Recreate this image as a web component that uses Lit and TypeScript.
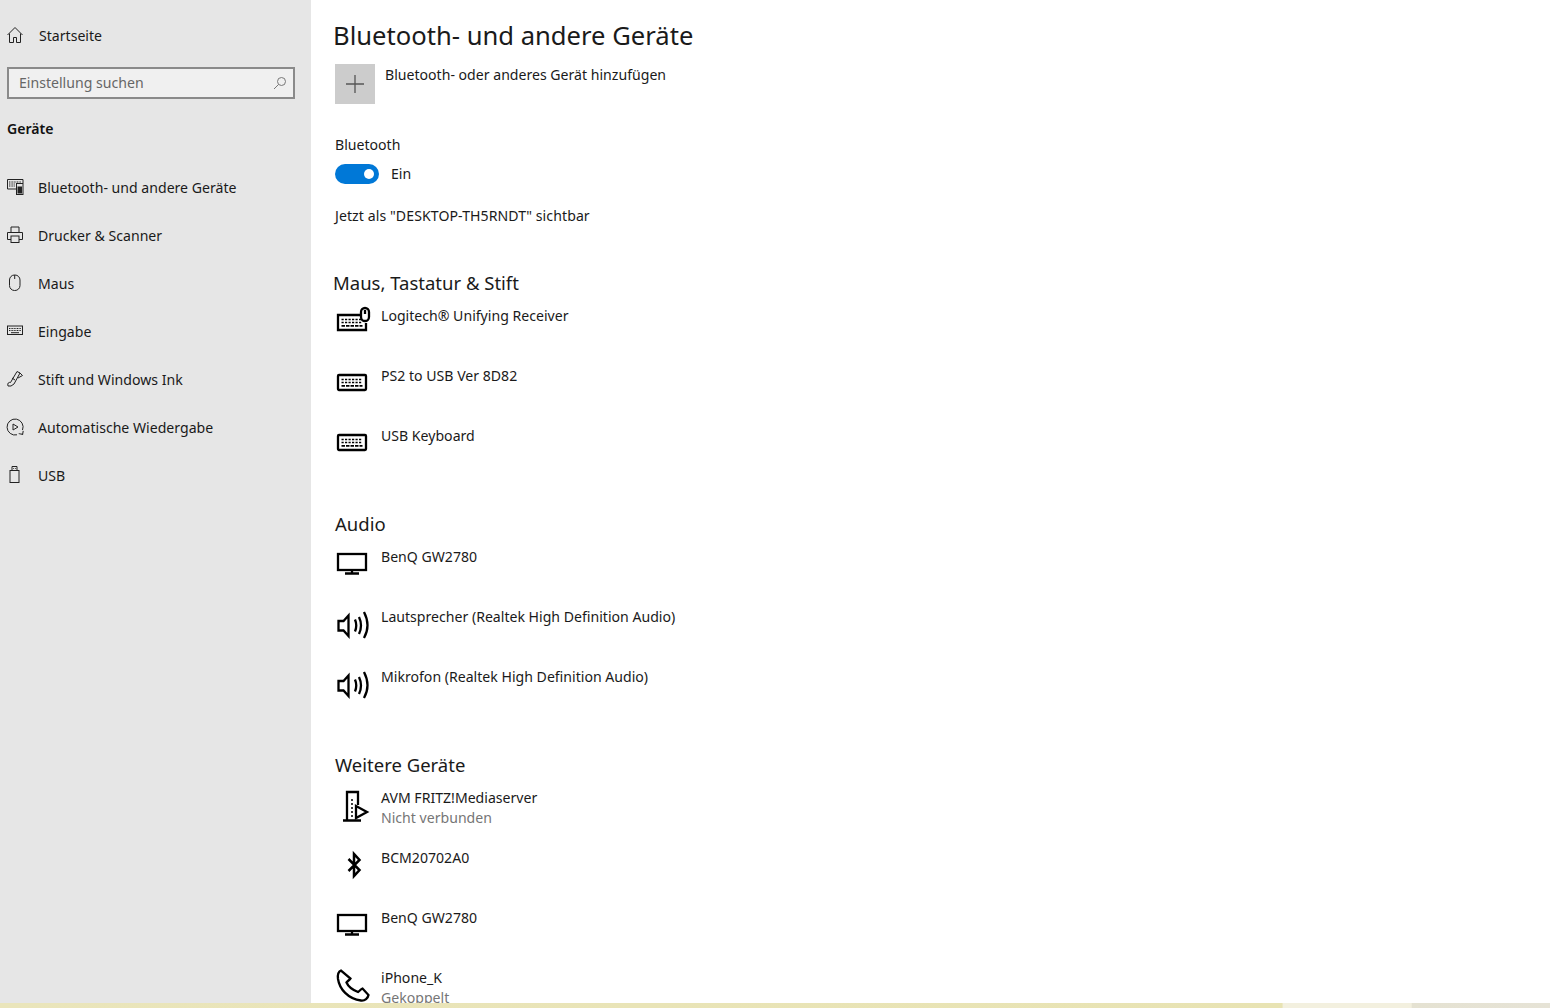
import { LitElement, html, css, svg } from "lit";
import { customElement } from "lit/decorators.js";

const side = (c: unknown) => html`<svg class="si" viewBox="0 0 18 20" fill="none" stroke="#222" stroke-width="1">${c}</svg>`;
const big = (c: unknown) => html`<svg class="bi" viewBox="0 0 36 40" fill="none" stroke="#000" stroke-width="2.300">${c}</svg>`;

const keys = svg`<path d="M6.500 14.500h21M6.500 17.500h21" stroke-width="1.700" stroke-dasharray="2.200 1.300"/><path d="M6.500 20.800h21" stroke-width="1.700" stroke-dasharray="3.500 1"/>`;
const keyboard = big(svg`<rect x="3" y="10" width="28" height="15" rx="1"/>${keys}`);
const kbMouse = big(svg`<path d="M27 10H3v15h28V18"/>${keys}<rect x="26" y="3" width="8" height="13" rx="4" fill="#fff"/><path d="M30 5v4"/>`);
const monitor = big(svg`<rect x="3" y="8" width="28" height="16"/><path d="M17 24v3M10 27.500h14"/>`);
const speaker = big(svg`<path d="M3.500 15h5l5-5.500v20.500l-5-5.500h-5z"/><path d="M20 13.500q2.500 6 0 12M24 11q4 8.500 0 17M29 6q7 13.500 0 26"/>`);
const media = big(svg`<path d="M23 18V5H12v28.500M8 33.500h18"/><path d="M17 12v18" stroke-dasharray="2 2" stroke-width="1.500"/><path d="M21 19l11 6-11 6z"/>`);
const bluetooth = big(svg`<path d="M13.500 12l11 11-5.500 6V7l5.500 6-11 11" stroke-width="2.500"/>`);
const phone = big(svg`<path d="M6 3.500C3.500 4.500 2.500 8 3 12 4.500 22 13 32 26 33.500c4 .5 7-2.500 7.500-5.500l-6-6.500c-1.500.5-3 2.500-4.500 3.500-5-2-10-6-11.500-9.500 1-1.500 3.500-3 4-4z"/>`);

const nav = [
  ["Bluetooth- und andere Geräte", side(svg`<path d="M10 12H1.500V2.500H17V6"/><path d="M3 5h12M3 7h6M3 9h6" stroke-dasharray="1 .6"/><rect x="10.500" y="6.500" width="6.500" height="11"/><rect x="12" y="10" width="3.500" height="6" fill="#222"/>`)],
  ["Drucker &amp; Scanner", side(svg`<path d="M5 7.500V2h8v5.500M5 14.500H1.500v-7h15v7H13"/><rect x="5" y="11" width="8" height="6.500"/>`)],
  ["Maus", side(svg`<rect x="3.500" y="2" width="10.500" height="15.500" rx="5"/><path d="M8.700 2v4"/>`)],
  ["Eingabe", side(svg`<rect x="1.500" y="5" width="15" height="8.500"/><path d="M3 7.500h12M3 9.500h12" stroke-dasharray="1 .6"/><path d="M5 11.700h8"/>`)],
  ["Stift und Windows Ink", side(svg`<path d="M2 17C1 14 3 13 4.500 13.500L11 2.500 14 4 8 15Q5 18 2 17z"/><path d="M12 9l4.500-2.500-3-3M6 9l3 2"/>`)],
  ["Automatische Wiedergabe", side(svg`<path d="M11 17.800A8 8 0 1 1 16.500 13"/><path d="M7 7l5 3-5 3z"/><path d="M13 17h4v-3.500" transform="rotate(10 15 15)"/>`)],
  ["USB", side(svg`<rect x="4" y="5.500" width="9" height="12"/><path d="M6 5.500v-4h5v4M7.300 3.500h.8M9.300 3.500h.8"/>`)],
] as const;

type Dev = [string, unknown, string?];
const sections: [string, string, Dev[]][] = [
  ["Maus, Tastatur & Stift", "tight", [["Logitech® Unifying Receiver", kbMouse], ["PS2 to USB Ver 8D82", keyboard], ["USB Keyboard", keyboard]]],
  ["Audio", "", [["BenQ GW2780", monitor], ["Lautsprecher (Realtek High Definition Audio)", speaker], ["Mikrofon (Realtek High Definition Audio)", speaker]]],
  ["Weitere Geräte", "", [["AVM FRITZ!Mediaserver", media, "Nicht verbunden"], ["BCM20702A0", bluetooth], ["BenQ GW2780", monitor], ["iPhone_K", phone, "Gekoppelt"]]],
];

@customElement("app-root")
export class AppRoot extends LitElement {
  static styles = css`
    :host { display: block; height: 1008px; overflow: hidden; background: #fff; color: #1a1a1a;
      font-family: "Noto Sans", "Open Sans", sans-serif; font-size: 14.1px; }
    .page { display: flex; flex-direction: column; height: 1008px; }
    .body { display: flex; flex: 1; min-height: 0; overflow: hidden; }
    aside { width: 311px; flex: none; background: #e6e6e6; padding: 11px 16px 0 7px; box-sizing: border-box; }
    .si { width: 18px; height: 20px; flex: none; }
    .home { display: flex; align-items: center; height: 48px; gap: 15px; }
    .home .si { margin-left: -1px; }
    .search { display: flex; align-items: center; justify-content: space-between; box-sizing: border-box; height: 32px;
      margin-top: 8px; border: 2px solid #8a8a8a; background: #f0f0f0; color: #666; padding: 0 6px 0 10px; }
    .search span { padding-bottom: 2px; }
    .cat { font-weight: 600; line-height: 20px; margin-top: 20px; margin-bottom: 24px; color: #111; }
    .nav { display: flex; align-items: center; height: 48px; gap: 14px; margin-left: -1px; }
    main { flex: 1; padding-left: 22px; min-width: 0; }
    h1 { font-size: 25.6px; font-weight: 400; line-height: 36px; margin: 18px 0 0; color: #1a1a1a; }
    .content { padding-left: 2px; }
    .add { display: flex; gap: 10px; margin-top: 10px; }
    .plus { width: 40px; height: 40px; background: #ccc; display: flex; align-items: center; justify-content: center; }
    .add span { line-height: 22px; }
    .label { line-height: 20px; margin-top: 31px; }
    .toggle { display: flex; align-items: center; gap: 12px; margin-top: 9px; height: 20px; }
    .toggle span { padding-bottom: 1px; }
    .track { width: 44px; height: 20px; border-radius: 10px; background: #0078d7; display: flex; align-items: center; justify-content: flex-end; padding-right: 5px; box-sizing: border-box; }
    .knob { width: 10px; height: 10px; border-radius: 50%; background: #fff; }
    .visible { line-height: 20px; margin-top: 22px; letter-spacing: .08px; }
    h2 { font-size: 18.5px; font-weight: 400; line-height: 28px; margin: 25px 0 8px; color: #1a1a1a; }
    h2.first { margin-top: 43px; }
    h2.tight { margin-left: -2px; }
    .dev { display: flex; height: 60px; gap: 10px; }
    .bi { width: 36px; height: 40px; flex: none; }
    .txt { padding-top: 1px; }
    .name { line-height: 20px; }
    .sub { line-height: 20px; color: #767676; }
    .strip { height: 5px; flex: none; background: linear-gradient(90deg, #eae5bb 0, #e8e3b3 82.700%, #f3f0df 82.800%, #f3f0df 91.050%, #e5e2d2 91.100%, #e6e3d6 100%); }
  `;

  render() {
    return html`<div class="page"><div class="body">
      <aside>
        <div class="home">
          <svg class="si" viewBox="0 0 18 20" fill="none" stroke="#222" stroke-width="1"><path d="M1.500 10L9 2.500 16.500 10M3.500 8.500V17.500h4v-5h3v5h4V8.500"/></svg>
          <span>Startseite</span>
        </div>
        <div class="search"><span>Einstellung suchen</span>
          <svg width="14" height="14" viewBox="0 0 14 14" fill="none" stroke="#777"><circle cx="8.500" cy="5.500" r="4"/><path d="M5.500 8.500L1 13"/></svg>
        </div>
        <div class="cat">Geräte</div>
        ${nav.map(([t, i]) => html`<div class="nav">${i}<span .innerHTML=${t}></span></div>`)}
      </aside>
      <main>
        <h1>Bluetooth- und andere Geräte</h1>
        <div class="content">
          <div class="add"><div class="plus"><svg width="18" height="18" viewBox="0 0 18 18" stroke="#555" stroke-width="1.300"><path d="M9 0v18M0 9h18"/></svg></div>
            <span>Bluetooth- oder anderes Gerät hinzufügen</span></div>
          <div class="label">Bluetooth</div>
          <div class="toggle"><div class="track"><div class="knob"></div></div><span>Ein</span></div>
          <div class="visible">Jetzt als "DESKTOP-TH5RNDT" sichtbar</div>
          ${sections.map(([h, cls, devs], si) => html`
            <h2 class="${cls} ${si === 0 ? "first" : ""}">${h}</h2>
            ${devs.map(([n, ic, s]) => html`<div class="dev">${ic}<div class="txt"><div class="name">${n}</div>${s ? html`<div class="sub">${s}</div>` : ""}</div></div>`)}
          `)}
        </div>
      </main>
    </div><div class="strip"></div></div>`;
  }
}
